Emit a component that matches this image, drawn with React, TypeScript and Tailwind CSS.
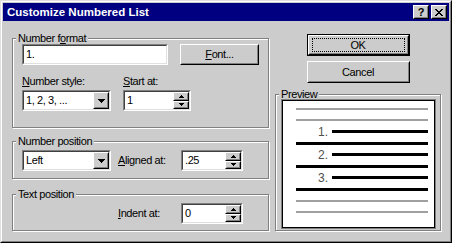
import React from "react";

type P = { className?: string; children?: React.ReactNode };

function Sunken({ className = "", children }: P) {
  return (
    <div className={`border border-t-[#808080] border-l-[#808080] border-r-white border-b-white ${className}`}>
      <div className="flex h-full w-full items-center border border-t-[#404040] border-l-[#404040] border-r-[#dfdfdf] border-b-[#dfdfdf] bg-white">
        {children}
      </div>
    </div>
  );
}

function Raised({ className = "", children }: P) {
  return (
    <div className={`border border-t-white border-l-white border-r-black border-b-black bg-[#cccccc] ${className}`}>
      <div className="flex h-full w-full items-center justify-center border border-t-[#cccccc] border-l-[#cccccc] border-r-[#808080] border-b-[#808080]">
        {children}
      </div>
    </div>
  );
}

function DownTri() {
  return (
    <svg width="7" height="4" shapeRendering="crispEdges">
      <path d="M0 0h7v1H0zM1 1h5v1H1zM2 2h3v1H2zM3 3h1v1H3z" fill="#000" />
    </svg>
  );
}

function Combo({ className = "", value }: { className?: string; value: string }) {
  return (
    <Sunken className={className}>
      <span className="flex-1 pl-[2px] whitespace-nowrap">{value}</span>
      <Raised className="h-full w-[16px]">
        <DownTri />
      </Raised>
    </Sunken>
  );
}

function Spin({ className = "", value }: { className?: string; value: string }) {
  return (
    <Sunken className={className}>
      <span className="flex-1 pl-[2px]">{value}</span>
      <div className="flex h-full w-[16px] flex-col">
        <Raised className="h-1/2 w-full">
          <svg width="5" height="3" shapeRendering="crispEdges">
            <path d="M2 0h1v1H2zM1 1h3v1H1zM0 2h5v1H0z" fill="#000" />
          </svg>
        </Raised>
        <Raised className="h-1/2 w-full">
          <svg width="5" height="3" shapeRendering="crispEdges">
            <path d="M0 0h5v1H0zM1 1h3v1H1zM2 2h1v1H2z" fill="#000" />
          </svg>
        </Raised>
      </div>
    </Sunken>
  );
}

function Group({ label, className = "", legendClass = "ml-[3px]", children }: P & { label: React.ReactNode; legendClass?: string }) {
  return (
    <fieldset
      className={`border border-[#808080] shadow-[inset_1px_1px_0_#ffffff,1px_1px_0_#ffffff] ${className}`}
    >
      <legend className={`${legendClass} px-[2px] leading-[13px] bg-[#cccccc]`}>{label}</legend>
      {children}
    </fieldset>
  );
}

const U = ({ children }: P) => <span className="underline underline-offset-[1px]">{children}</span>;

type Row = { kind: "gray" | "black" | "num"; n?: string };
const rows: Row[] = [
  { kind: "gray" },
  { kind: "gray" },
  { kind: "num", n: "1." },
  { kind: "black" },
  { kind: "num", n: "2." },
  { kind: "black" },
  { kind: "num", n: "3." },
  { kind: "black" },
  { kind: "gray" },
  { kind: "gray" },
];

export default function App() {
  return (
    <div className="h-[243px] w-[452px] border border-t-[#dfdfdf] border-l-[#dfdfdf] border-r-black border-b-black bg-[#cccccc] font-['Liberation_Sans',Arial,sans-serif] text-[11px] leading-[13px] tracking-[-0.4px] text-black">
      <div className="flex h-full flex-col border border-t-white border-l-white border-r-[#808080] border-b-[#808080] p-px">
        {/* Title bar */}
        <div className="flex h-[18px] shrink-0 items-center bg-[#000080] pl-[4px] pr-[2px]">
          <span className="flex-1 text-[11.5px] font-bold tracking-normal text-white">Customize Numbered List</span>
          <div className="flex gap-[2px]">
            <Raised className="h-[14px] w-[16px]">
              <span className="text-[11px] font-bold leading-[11px] tracking-normal">?</span>
            </Raised>
            <Raised className="h-[14px] w-[16px]">
              <svg width="8" height="7" shapeRendering="crispEdges">
                <path
                  d="M0 0h2v1H0zM6 0h2v1H6zM1 1h2v1H1zM5 1h2v1H5zM2 2h4v1H2zM3 3h2v1H3zM2 4h4v1H2zM1 5h2v1H1zM5 5h2v1H5zM0 6h2v1H0zM6 6h2v1H6z"
                  fill="#000"
                />
              </svg>
            </Raised>
          </div>
        </div>

        {/* Body */}
        <div className="flex flex-1 pl-[9px]">
          {/* Left column */}
          <div className="flex w-[257px] flex-col">
            <Group
              className="mt-[11px]"
              label={
                <>
                  Number f<U>o</U>rmat
                </>
              }
            >
              <div className="pl-[9px] pb-[16px]">
                <div className="-mt-px flex gap-[12px]">
                  <Sunken className="h-[21px] w-[146px]">
                    <span className="pl-[2px]">1.</span>
                  </Sunken>
                  <Raised className="h-[21px] w-[79px]">
                    <span>
                      <U>F</U>ont...
                    </span>
                  </Raised>
                </div>
                <div className="mt-[10px] flex gap-[12px]">
                  <div className="flex w-[89px] flex-col gap-[2px]">
                    <span className="whitespace-nowrap">
                      <U>N</U>umber style:
                    </span>
                    <Combo className="h-[21px] w-[89px]" value="1, 2, 3, ..." />
                  </div>
                  <div className="flex w-[68px] flex-col gap-[2px]">
                    <span className="whitespace-nowrap">
                      <U>S</U>tart at:
                    </span>
                    <Spin className="h-[21px] w-[68px]" value="1" />
                  </div>
                </div>
              </div>
            </Group>

            <Group className="mt-[7px]" label="Number position">
              <div className="flex items-center pl-[9px] pb-[7px] pt-[2px]">
                <Combo className="h-[21px] w-[89px]" value="Left" />
                <span className="ml-[7px] w-[63px] whitespace-nowrap">
                  <U>A</U>ligned at:
                </span>
                <Spin className="h-[21px] w-[62px]" value=".25" />
              </div>
            </Group>

            <Group className="mt-[9px]" label="Text position">
              <div className="flex items-center pl-[105px] pb-[6px] pt-[2px]">
                <span className="w-[63px] whitespace-nowrap">
                  <U>I</U>ndent at:
                </span>
                <Spin className="h-[21px] w-[62px]" value="0" />
              </div>
            </Group>
          </div>

          {/* Right column */}
          <div className="ml-[6px] flex w-[166px] flex-col items-center">
            <div className="mt-[13px] h-[22px] w-[103px] border border-black">
              <Raised className="h-full w-full">
                <div className="flex h-[14px] w-[93px] items-center justify-center border border-dotted border-black">
                  OK
                </div>
              </Raised>
            </div>
            <Raised className="mt-[5px] h-[22px] w-[103px]">Cancel</Raised>

            <Group className="mt-[5px] w-[166px]" label="Preview">
              <div className="-mt-[2px] pl-[5px] pb-[1px]">
                <div className="h-[130px] w-[155px] border border-[#808080]">
                  <div className="h-full w-full border border-black bg-white pl-[13px] pt-[2px]">
                    {rows.map((r, i) => (
                      <div key={i} className="flex h-[11.5px] w-[132px] items-center">
                        {r.kind === "gray" && <div className="h-[2px] w-[132px] bg-[#a0a0a0]" />}
                        {r.kind === "black" && <div className="h-[3px] w-[132px] bg-black" />}
                        {r.kind === "num" && (
                          <>
                            <span className="w-[36px] pr-[4px] text-right text-[12px] leading-[12px] tracking-normal text-[#505050]">
                              {r.n}
                            </span>
                            <div className="h-[3px] w-[96px] bg-black" />
                          </>
                        )}
                      </div>
                    ))}
                  </div>
                </div>
              </div>
            </Group>
          </div>
        </div>
      </div>
    </div>
  );
}
